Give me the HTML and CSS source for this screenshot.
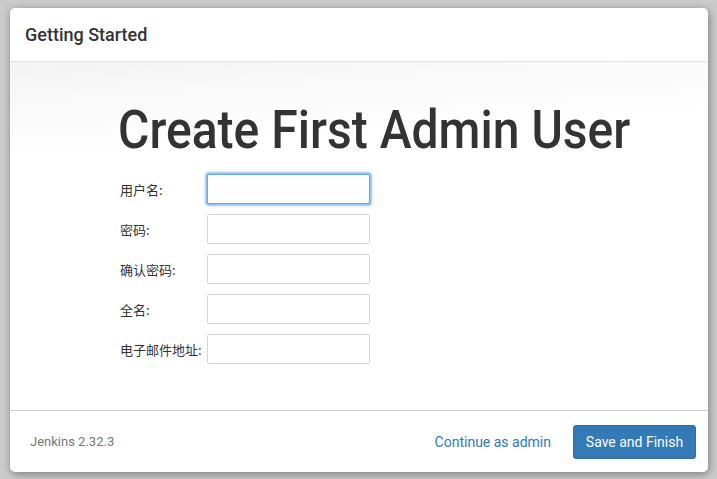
FILE: index.html
```html
<!DOCTYPE html>
<html>
<head>
<meta charset="utf-8">
<link rel="stylesheet" href="styles.css">
</head>
<body>
<div class="modal">
  <div class="modal-header">Getting Started</div>
  <div class="modal-body">
    <h1 class="title">Create First Admin User</h1>
    <div class="form">
      <div class="row"><label class="lbl">用户名:</label><input class="field focused" type="text"></div>
      <div class="row"><label class="lbl">密码:</label><input class="field" type="password"></div>
      <div class="row"><label class="lbl">确认密码:</label><input class="field" type="password"></div>
      <div class="row"><label class="lbl">全名:</label><input class="field" type="text"></div>
      <div class="row"><label class="lbl">电子邮件地址:</label><input class="field" type="text"></div>
    </div>
  </div>
  <div class="modal-footer">
    <span class="version">Jenkins 2.32.3</span>
    <span class="spacer"></span>
    <a class="link">Continue as admin</a>
    <button class="btn">Save and Finish</button>
  </div>
</div>
</body>
</html>
```
FILE: styles.css
```css
html, body {
  margin: 0;
  height: 100%;
}
body {
  background: #cbcbcb;
  font-family: Roboto, "Noto Sans CJK SC", sans-serif;
  color: #333;
  padding: 8px 9px 7px 10px;
  box-sizing: border-box;
}
.modal {
  width: 698px;
  height: 464px;
  background: #fff;
  border-radius: 5px;
  box-shadow: 1px 2px 8px rgba(0,0,0,0.4);
  display: flex;
  flex-direction: column;
  overflow: hidden;
}
.modal-header {
  height: 54px;
  box-sizing: border-box;
  border-bottom: 1px solid #e3e3e3;
  padding: 0 15px;
  display: flex;
  align-items: center;
  font-size: 18px;
  font-weight: 500;
  color: #333;
}
.modal-body {
  flex: 1;
  background: linear-gradient(176deg, #f3f3f3 0px, #f9f9f9 40px, #fff 100px);
  padding: 37px 0 0 108px;
}
.title {
  margin: 0;
  font-size: 54px;
  line-height: 62px;
  font-weight: 500;
  color: #333;
  white-space: nowrap;
  transform: scaleX(0.89);
  transform-origin: 0 50%;
}
.form {
  margin-top: 13px;
  display: flex;
  flex-direction: column;
  gap: 10px;
}
.row {
  display: flex;
  align-items: center;
  height: 30px;
}
.lbl {
  width: 89px;
  padding-left: 2px;
  box-sizing: border-box;
  font-size: 13px;
  color: #333;
  font-family: "Noto Sans CJK SC", sans-serif;
  white-space: nowrap;
}
.field {
  width: 163px;
  height: 30px;
  box-sizing: border-box;
  border: 1px solid #d4d4d4;
  border-radius: 2px;
  margin: 0;
  padding: 0 6px;
  background: #fff;
  outline: none;
}
.field.focused {
  border: 1px solid #6aa8ec;
  box-shadow: 0 0 0 1.5px #8fc1f5, 0 0 3px 2px rgba(120,175,240,0.5);
}
.modal-footer {
  height: 62px;
  box-sizing: border-box;
  border-top: 1px solid #cfcfcf;
  display: flex;
  align-items: center;
  padding: 0 12px 0 20px;
}
.version {
  font-size: 13px;
  color: #777;
}
.spacer { flex: 1; }
.link {
  font-size: 14px;
  color: #337ab7;
  margin-right: 22px;
}
.btn {
  width: 123px;
  height: 34px;
  background: #337ab7;
  border: 1px solid #2e6da4;
  border-radius: 3px;
  color: #fff;
  font-family: Roboto, sans-serif;
  font-size: 14px;
  padding: 0;
}
```
